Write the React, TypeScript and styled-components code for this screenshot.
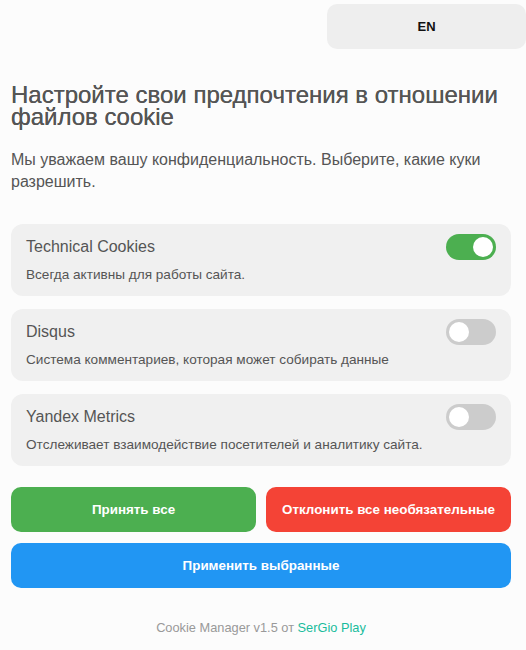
import React, { useState } from "react";
import styled, { createGlobalStyle } from "styled-components";

const Global = createGlobalStyle`
  html, body { margin: 0; padding: 0; background: #fcfcfc; }
  body { font-family: "Liberation Sans", Arial, sans-serif; color: #555; }
  * { box-sizing: border-box; }
`;

const Page = styled.div`
  width: 526px;
  min-height: 650px;
  padding: 4px 15px 0 11px;
  display: flex;
  flex-direction: column;
`;

const TopBar = styled.div`
  display: flex;
  justify-content: flex-end;
  margin-right: -15px;
`;

const LangButton = styled.button`
  width: 199px;
  height: 45px;
  border: none;
  border-radius: 10px;
  background: #eeeeee;
  color: #111;
  font-family: inherit;
  font-weight: bold;
  font-size: 13px;
  cursor: pointer;
`;

const Title = styled.h1`
  margin: 35px 0 0;
  font-size: 24px;
  line-height: 22px;
  font-weight: normal;
  color: #555;
  letter-spacing: 0;
  text-shadow: 0 0 0.4px #555;
`;

const Intro = styled.p`
  margin: 21px 0 0;
  font-size: 16px;
  line-height: 22px;
  color: #555;
`;

const List = styled.div`
  display: flex;
  flex-direction: column;
  gap: 13px;
  margin-top: 31px;
`;

const Card = styled.div`
  background: #f0f0f0;
  border-radius: 12px;
  padding: 10px 15px 12px;
`;

const CardHead = styled.div`
  display: flex;
  align-items: center;
  justify-content: space-between;
  height: 26px;
`;

const CardTitle = styled.span`
  font-size: 16px;
  color: #555;
`;

const CardDesc = styled.div`
  margin-top: 6px;
  font-size: 13.6px;
  line-height: 18px;
  color: #555;
`;

const Toggle = styled.button<{ $on: boolean }>`
  position: relative;
  width: 50px;
  height: 26px;
  border: none;
  padding: 0;
  border-radius: 13px;
  background: ${(p) => (p.$on ? "#4caf50" : "#cccccc")};
  cursor: pointer;
  &::after {
    content: "";
    position: absolute;
    top: 3px;
    left: ${(p) => (p.$on ? "27px" : "3px")};
    width: 20px;
    height: 20px;
    border-radius: 50%;
    background: #fff;
  }
`;

const ButtonRow = styled.div`
  display: grid;
  grid-template-columns: 1fr 1fr;
  gap: 10px;
  margin-top: 21px;
`;

const ActionButton = styled.button<{ $color: string }>`
  height: 45px;
  border: none;
  border-radius: 10px;
  background: ${(p) => p.$color};
  color: #fff;
  font-family: inherit;
  font-weight: bold;
  font-size: 13.4px;
  cursor: pointer;
`;

const WideButton = styled(ActionButton)`
  width: 100%;
  margin-top: 11px;
`;

const Footer = styled.div`
  margin-top: 32px;
  text-align: center;
  font-size: 12.8px;
  color: #999;
`;

const Link = styled.a`
  color: #1abc9c;
  text-decoration: none;
`;

const items = [
  { title: "Technical Cookies", desc: "Всегда активны для работы сайта.", on: true },
  { title: "Disqus", desc: "Система комментариев, которая может собирать данные", on: false },
  { title: "Yandex Metrics", desc: "Отслеживает взаимодействие посетителей и аналитику сайта.", on: false },
];

export default function App() {
  const [state, setState] = useState(items.map((i) => i.on));
  return (
    <>
      <Global />
      <Page>
        <TopBar>
          <LangButton>EN</LangButton>
        </TopBar>
        <Title>Настройте свои предпочтения в отношении файлов cookie</Title>
        <Intro>Мы уважаем вашу конфиденциальность. Выберите, какие куки разрешить.</Intro>
        <List>
          {items.map((it, i) => (
            <Card key={it.title}>
              <CardHead>
                <CardTitle>{it.title}</CardTitle>
                <Toggle
                  $on={state[i]}
                  onClick={() => i > 0 && setState((s) => s.map((v, j) => (j === i ? !v : v)))}
                />
              </CardHead>
              <CardDesc>{it.desc}</CardDesc>
            </Card>
          ))}
        </List>
        <ButtonRow>
          <ActionButton $color="#4caf50">Принять все</ActionButton>
          <ActionButton $color="#f44336">Отклонить все необязательные</ActionButton>
        </ButtonRow>
        <WideButton $color="#2196f3">Применить выбранные</WideButton>
        <Footer>
          Cookie Manager v1.5 от <Link href="#">SerGio Play</Link>
        </Footer>
      </Page>
    </>
  );
}
